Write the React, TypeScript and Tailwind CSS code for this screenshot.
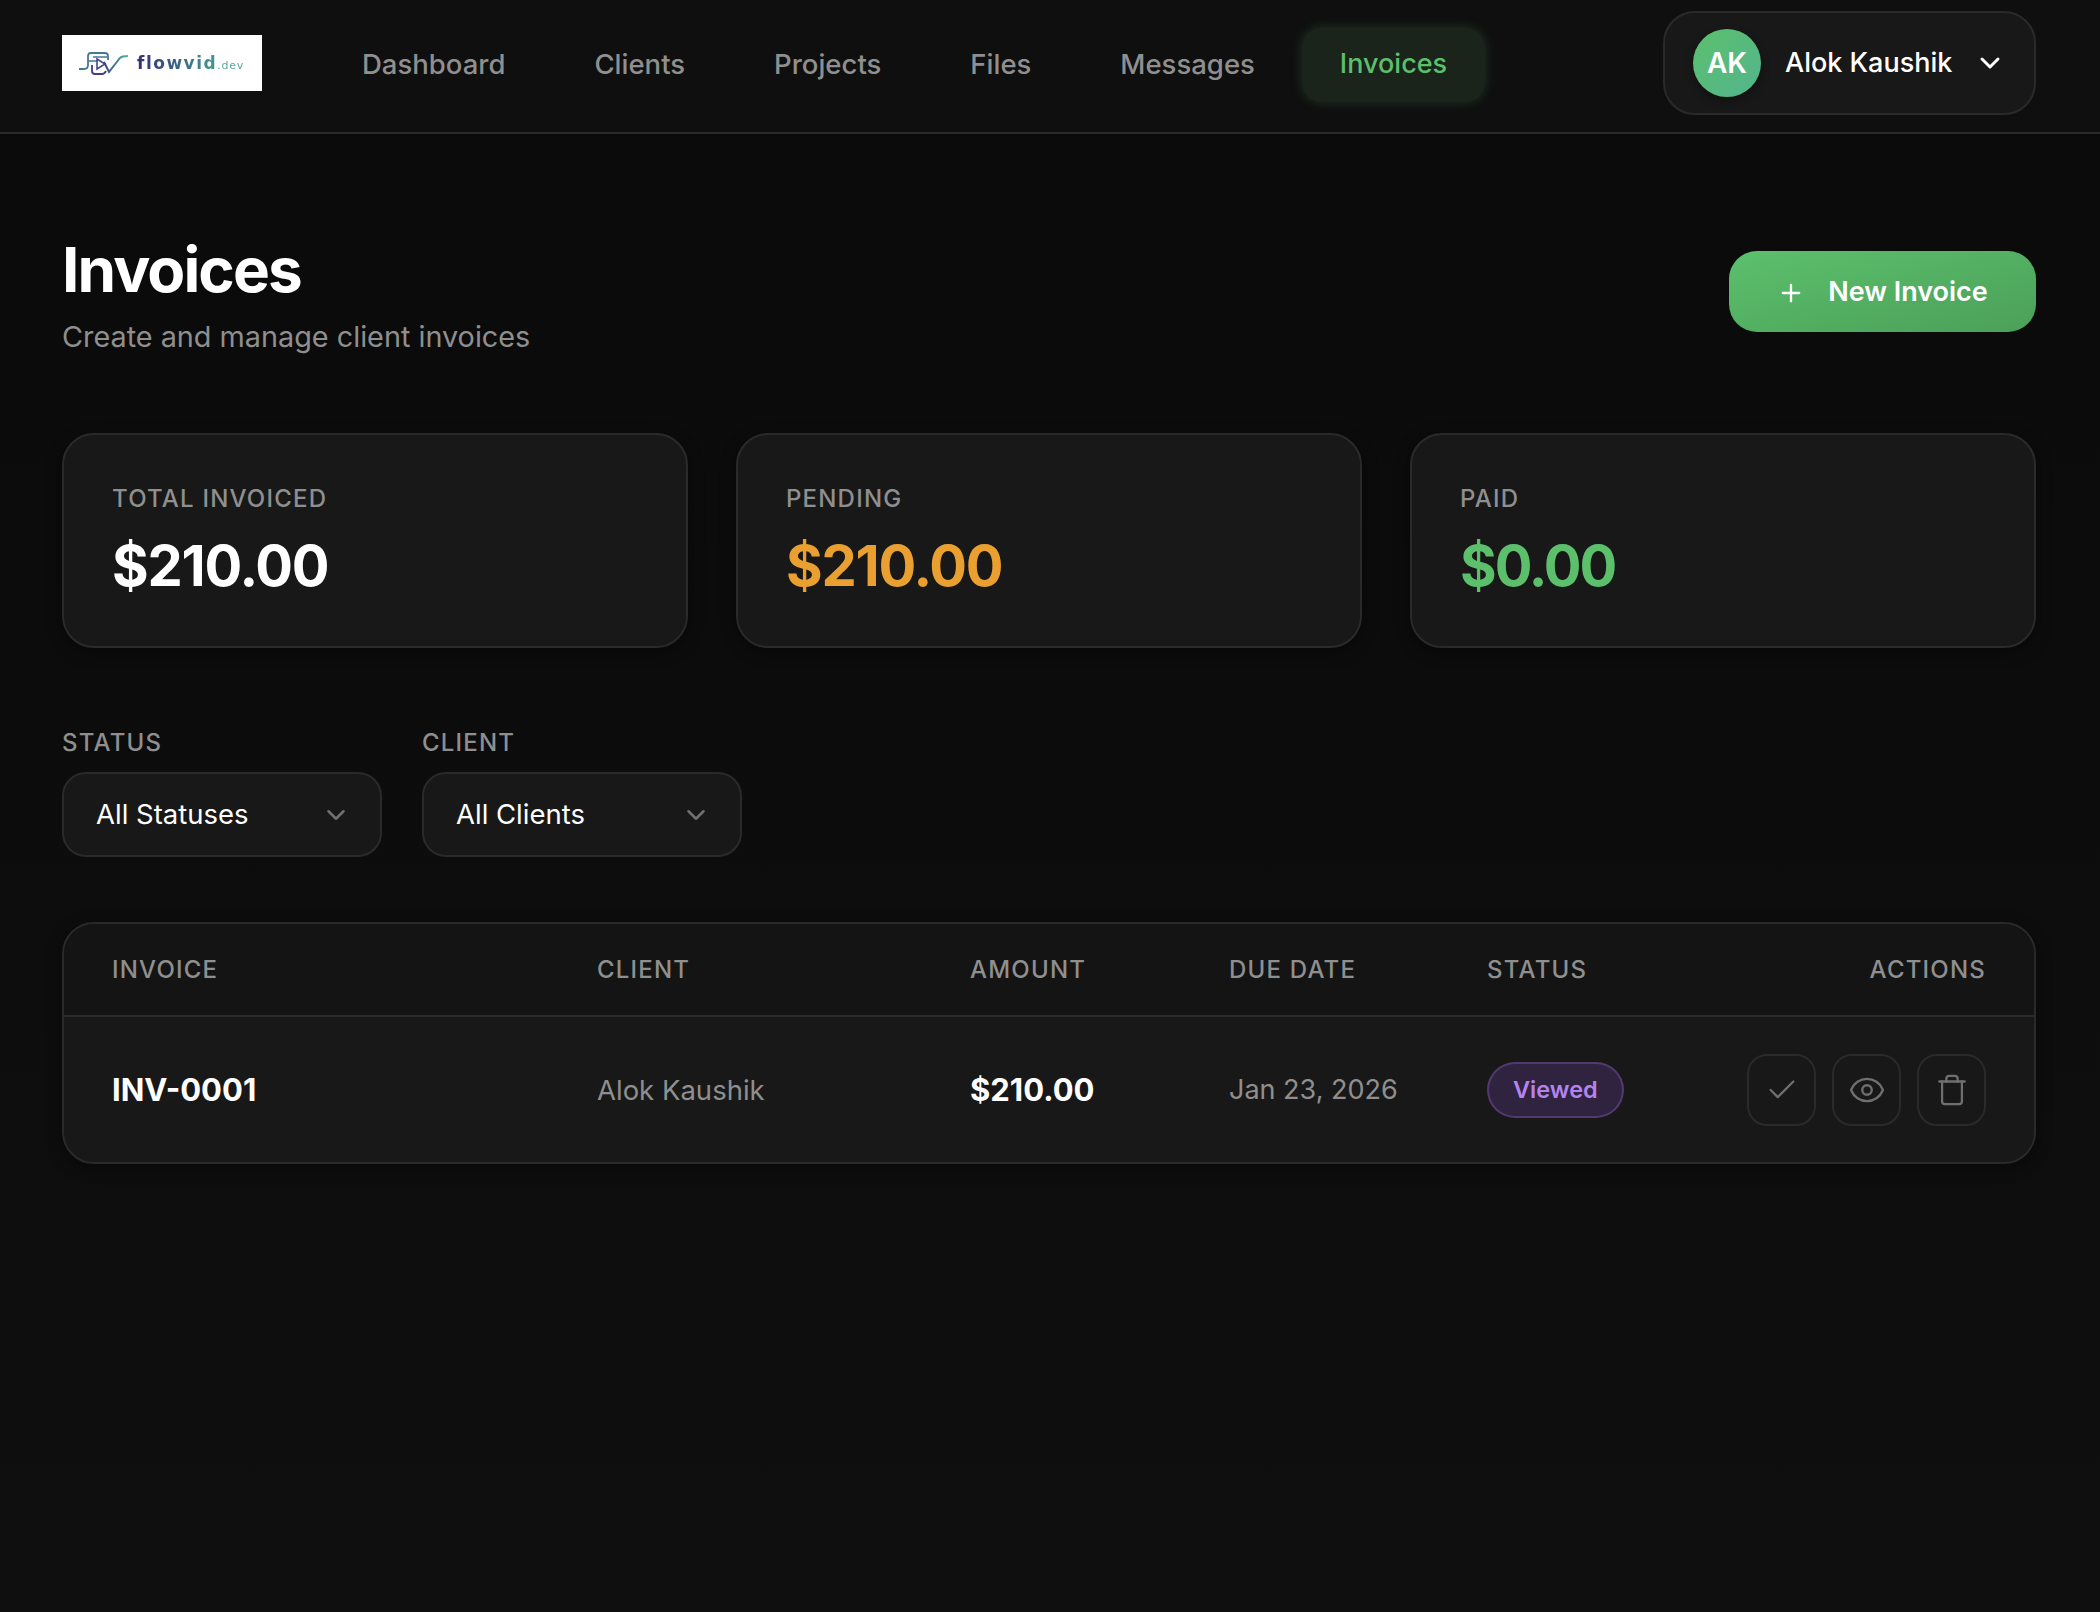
import { Check, ChevronDown, Eye, Plus, Trash } from "lucide-react";

function Logo() {
  return (
    <div className="flex h-[56px] w-[200px] items-center bg-white pl-[16px]">
      <svg width="52" height="24" viewBox="0 0 52 24" fill="none" className="shrink-0 blur-[0.3px]">
        <defs>
          <linearGradient id="lg" x1="0" y1="0" x2="1" y2="0">
            <stop offset="0" stopColor="#3c3f80" />
            <stop offset="1" stopColor="#54b8a0" />
          </linearGradient>
        </defs>
        <path d="M1 18h5c3 0 4-2 4-4V5c0-2 1-3 3-3h14c2 0 3 1 3 3v4" stroke="#447a92" strokeWidth="1.8" />
        <path d="M10 10h9M15 6h14" stroke="#447a92" strokeWidth="1.5" />
        <path d="M14 14v6c0 2 1 3 3 3h7c2 0 3-1 4-3" stroke="#3f3f85" strokeWidth="1.8" />
        <path d="M19 8l8 5-8 5z" stroke="#434a8c" strokeWidth="1.6" />
        <path d="M26 11l5 10L42 7c1-1 4-2 8-2" stroke="url(#lg)" strokeWidth="2" />
      </svg>
      <span className="ml-[7px] flex items-baseline font-['DejaVu_Sans'] text-[17px] font-bold leading-none blur-[0.3px]">
        <span className="bg-gradient-to-r from-[#352d78] to-[#3f9a90] bg-clip-text tracking-[1.5px] text-transparent">flowvid</span>
        <span className="text-[11px] font-normal tracking-[0.8px] text-[#5aa89e]">.dev</span>
      </span>
    </div>
  );
}

function NavLink({ label, active }: { label: string; active?: boolean }) {
  return active ? (
    <a className="mt-[3px] flex h-[74px] items-center rounded-[20px] bg-[#1a241b] px-[38px] text-[27px] font-medium text-[#5cbf6c] shadow-[0_0_12px_rgba(92,191,108,0.22)]">
      {label}
    </a>
  ) : (
    <a className="mt-[3px] flex h-[74px] items-center px-[40px] text-[27.5px] font-medium text-[#8f8f8f]">{label}</a>
  );
}

function Stat({ label, value, color }: { label: string; value: string; color: string }) {
  return (
    <div className="flex h-[215px] flex-col rounded-[32px] border-2 border-[#2a2a2a] bg-[#181818] px-[48px] pt-[46px] shadow-[0_4px_16px_rgba(0,0,0,0.4)]">
      <div className="text-[24px] font-medium leading-[36px] tracking-[1.2px] text-[#8f8f8f]">{label}</div>
      <div className={`mt-[15px] text-[56px] font-bold leading-[68px] ${color}`}>{value}</div>
    </div>
  );
}

function Filter({ label, value }: { label: string; value: string }) {
  return (
    <div className="w-[320px]">
      <div className="mb-[14px] text-[24px] font-medium leading-[30px] tracking-[1.2px] text-[#8f8f8f]">{label}</div>
      <div className="flex h-[85px] items-center justify-between rounded-[24px] border-2 border-[#2a2a2a] bg-[#181818] pl-[32px] pr-[29px] text-[27.5px] text-white">
        {value}
        <ChevronDown size={30} strokeWidth={2} className="text-[#707070]" />
      </div>
    </div>
  );
}

function IconBtn({ children }: { children: React.ReactNode }) {
  return (
    <button className="flex h-[72px] w-[69px] items-center justify-center rounded-[20px] border-2 border-[#2a2a2a] text-[#6f6f6f]">
      {children}
    </button>
  );
}

export default function App() {
  const head = "text-[24px] font-medium tracking-[1.2px] text-[#8f8f8f]";
  return (
    <div className="min-h-[1612px] bg-gradient-to-b from-[#0a0a0a] to-[#0f0f0f] font-['Inter',sans-serif] text-white">
      <header className="flex h-[134px] items-center justify-between border-b-2 border-[#2a2a2a] bg-[#0f0f0f] pb-[6px] pl-[62px] pr-[64px]">
        <div className="flex items-center">
          <Logo />
          <nav className="ml-[60px] flex items-center gap-[9px]">
            <NavLink label="Dashboard" />
            <NavLink label="Clients" />
            <NavLink label="Projects" />
            <NavLink label="Files" />
            <NavLink label="Messages" />
            <div className="-ml-[2px] flex">
              <NavLink label="Invoices" active />
            </div>
          </nav>
        </div>
        <div className="flex h-[104px] w-[373px] items-center rounded-[32px] border-2 border-[#2a2a2a] bg-[#181818] pl-[28px]">
          <div className="flex h-[68px] w-[68px] items-center justify-center rounded-full bg-gradient-to-br from-[#5cbf6c] to-[#52b58d] text-[28px] font-semibold shadow-[0_4px_10px_rgba(0,0,0,0.3)]">
            AK
          </div>
          <span className="ml-[24px] text-[27px] font-medium">Alok Kaushik</span>
          <ChevronDown size={32} strokeWidth={2.2} className="ml-[22px]" />
        </div>
      </header>

      <main className="pl-[62px] pr-[64px]">
        <section className="mt-[100px] flex items-start justify-between">
          <div>
            <h1 className="text-[62px] font-bold leading-[72px] tracking-[-1.9px]">Invoices</h1>
            <p className="mt-[11px] text-[28.8px] leading-[40px] text-[#8f8f8f]">Create and manage client invoices</p>
          </div>
          <button className="mt-[17px] flex h-[81px] w-[307px] items-center justify-center gap-[23px] rounded-[28px] bg-gradient-to-br from-[#5cc06d] to-[#4ba058] pt-[2px] text-[27px] font-semibold text-white">
            <Plus size={28} strokeWidth={2} />
            New Invoice
          </button>
        </section>

        <section className="mt-[76px] grid grid-cols-3 gap-[48px]">
          <Stat label="TOTAL INVOICED" value="$210.00" color="tracking-[-1.2px] text-white" />
          <Stat label="PENDING" value="$210.00" color="tracking-[-1.2px] text-[#eaa030]" />
          <Stat label="PAID" value="$0.00" color="tracking-[-2px] text-[#5cbf6c]" />
        </section>

        <section className="mt-[80px] flex gap-[40px]">
          <Filter label="STATUS" value="All Statuses" />
          <Filter label="CLIENT" value="All Clients" />
        </section>

        <section className="mt-[65px] overflow-hidden rounded-[32px] border-2 border-[#2a2a2a] bg-[#181818] shadow-[0_4px_16px_rgba(0,0,0,0.4)]">
          <div className="grid h-[93px] grid-cols-[485px_373px_259px_258px_1fr] items-center border-b-2 border-[#2a2a2a] bg-[#141414] px-[48px]">
            <div className={head}>INVOICE</div>
            <div className={head}>CLIENT</div>
            <div className={head}>AMOUNT</div>
            <div className={head}>DUE DATE</div>
            <div className="flex justify-between">
              <span className={head}>STATUS</span>
              <span className={head}>ACTIONS</span>
            </div>
          </div>
          <div className="grid h-[145px] grid-cols-[485px_373px_259px_258px_1fr] items-center px-[48px]">
            <div className="mt-[2px] text-[31px] font-bold">INV-0001</div>
            <div className="mt-[2px] text-[27.5px] text-[#8f8f8f]">Alok Kaushik</div>
            <div className="mt-[2px] text-[31px] font-bold">$210.00</div>
            <div className="mt-[2px] text-[27px] text-[#8f8f8f]">Jan 23, 2026</div>
            <div className="flex items-center justify-between">
              <span className="flex h-[56px] items-center rounded-full border-2 border-[#a56fe04d] bg-[#2f2340] px-[24px] text-[23.5px] font-semibold text-[#b483ee]">
                Viewed
              </span>
              <div className="flex gap-[16px]">
                <IconBtn>
                  <Check size={34} strokeWidth={1.6} />
                </IconBtn>
                <IconBtn>
                  <Eye size={38} strokeWidth={1.5} />
                </IconBtn>
                <IconBtn>
                  <Trash size={34} strokeWidth={1.6} />
                </IconBtn>
              </div>
            </div>
          </div>
        </section>
      </main>
    </div>
  );
}
